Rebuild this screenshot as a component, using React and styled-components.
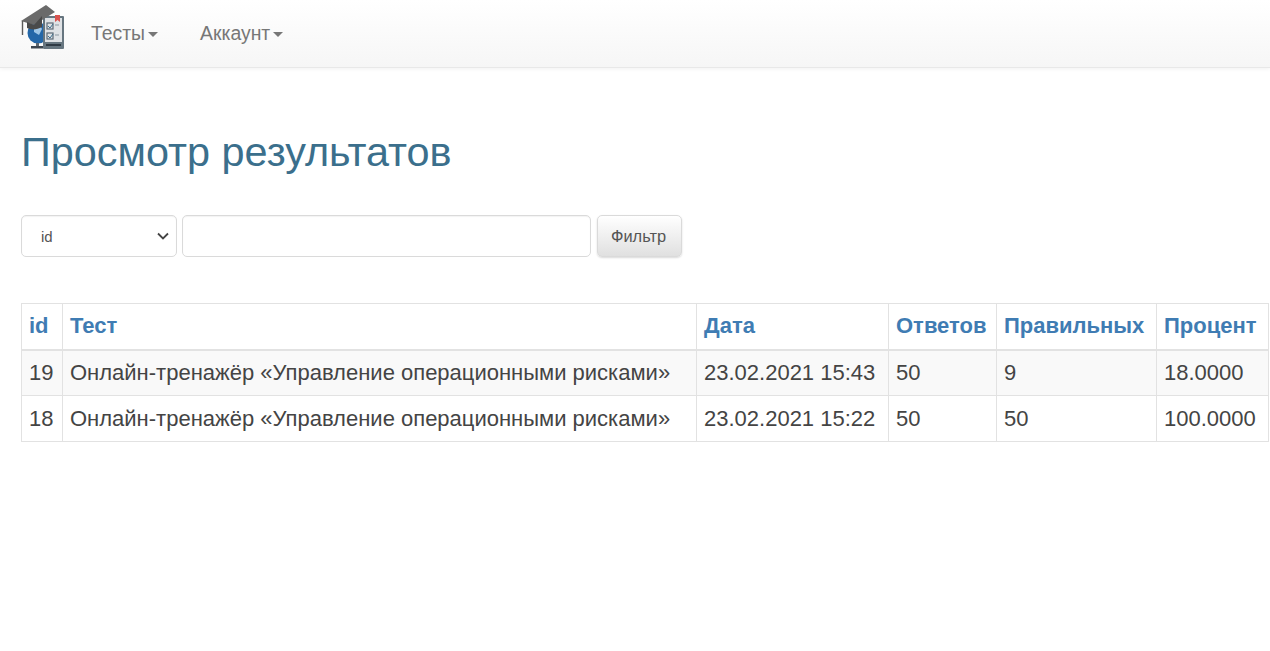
import React from "react";
import styled, { createGlobalStyle } from "styled-components";

const GlobalStyle = createGlobalStyle`
  html, body {
    margin: 0;
    background: #fff;
    font-family: "Liberation Sans", Arial, sans-serif;
    color: #333;
  }
`;

const NavBar = styled.nav`
  height: 68px;
  box-sizing: border-box;
  display: flex;
  align-items: flex-start;
  background: linear-gradient(to bottom, #fff 0%, #f6f6f6 100%);
  border-bottom: 1px solid #e8e8e8;
  box-shadow: 0 1px 4px rgba(0, 0, 0, 0.06);
  padding-left: 20px;
`;

const Logo = styled.svg`
  width: 46px;
  height: 50px;
  flex: none;
  margin-top: 3px;
  filter: blur(0.4px);
`;

const NavItem = styled.a`
  display: flex;
  align-items: center;
  height: 66px;
  font-size: 19.4px;
  color: #777;
  margin-left: ${(p) => p.$gap}px;
`;

const Caret = styled.span`
  width: 0;
  height: 0;
  margin-left: 3px;
  margin-top: 2px;
  border-top: 5px solid #777;
  border-left: 5px solid transparent;
  border-right: 5px solid transparent;
`;

const Main = styled.main`
  padding: 0 2px 0 21px;
`;

const Title = styled.h1`
  margin: 58px 0 0;
  font-size: 41.4px;
  line-height: 52px;
  font-weight: 400;
  color: #3b6f8c;
`;

const FilterForm = styled.form`
  display: flex;
  gap: 5px;
  margin-top: 37px;
  height: 42px;
`;

const Select = styled.div`
  width: 156px;
  box-sizing: border-box;
  display: flex;
  align-items: center;
  justify-content: space-between;
  padding: 0 5px 0 19px;
  border: 1px solid #dadada;
  border-radius: 5px;
  font-size: 15px;
  color: #555;
  box-shadow: inset 0 1px 1px rgba(0, 0, 0, 0.05);
`;

const Chevron = styled.svg`
  width: 16px;
  height: 16px;
`;

const Input = styled.input`
  width: 409px;
  box-sizing: border-box;
  border: 1px solid #dadada;
  border-radius: 5px;
  box-shadow: inset 0 1px 1px rgba(0, 0, 0, 0.05);
  outline: none;
`;

const FilterButton = styled.button`
  width: 85px;
  box-sizing: border-box;
  margin-left: 1px;
  border: 1px solid #dadada;
  border-radius: 5px;
  background: linear-gradient(to bottom, #fff 0%, #e0e0e0 100%);
  box-shadow: 0 1px 2px rgba(0, 0, 0, 0.15);
  font-family: inherit;
  font-size: 16.4px;
  color: #555;
  padding: 0 2px 0 0;
`;

const Table = styled.table`
  margin-top: 46px;
  width: 1247px;
  border-collapse: collapse;
  table-layout: fixed;
  font-size: 22px;
`;

const HeadCell = styled.th`
  height: 46px;
  box-sizing: border-box;
  padding: 0 7px;
  text-align: left;
  font-weight: 700;
  color: #3f7cb3;
  border: 1px solid #e2e2e2;
  border-bottom-width: 2px;
  white-space: nowrap;
`;

const Row = styled.tr`
  background: ${(p) => (p.$striped ? "#f9f9f9" : "#fff")};
`;

const Cell = styled.td`
  height: 46px;
  box-sizing: border-box;
  padding: 0 7px;
  border: 1px solid #e2e2e2;
  white-space: nowrap;
  color: #444;
`;

const columns = [
  { title: "id", width: 41 },
  { title: "Тест", width: 634 },
  { title: "Дата", width: 192 },
  { title: "Ответов", width: 108 },
  { title: "Правильных", width: 160 },
  { title: "Процент", width: 112 },
];

const results = [
  ["19", "Онлайн-тренажёр «Управление операционными рисками»", "23.02.2021 15:43", "50", "9", "18.0000"],
  ["18", "Онлайн-тренажёр «Управление операционными рисками»", "23.02.2021 15:22", "50", "50", "100.0000"],
];

// coordinates are page pixels, the viewBox starts where the logo sits
const LogoIcon = () => (
  <Logo viewBox="20 3 46 50">
    <circle cx="38" cy="33" r="10.5" fill="#2467a8" />
    <path d="M34 27c3-2 7-1 8 2l-3 6-5-3z" fill="#9fc6e6" />
    <path d="M31 46h12v2.500H31z" fill="#3d4650" />
    <path d="M36 43h3v3h-3z" fill="#5c6670" />
    <rect x="43" y="16" width="21" height="33" rx="1" fill="#66757f" />
    <rect x="45" y="18" width="17" height="24" fill="#dfe2e5" />
    <rect x="47" y="23" width="6" height="6" fill="none" stroke="#5d6a76" strokeWidth="1.200" />
    <rect x="47" y="33" width="6" height="6" fill="none" stroke="#5d6a76" strokeWidth="1.200" />
    <path d="M48 26l2 2 3-4M48 36l2 2 3-4" fill="none" stroke="#3b6f8c" strokeWidth="1" />
    <path d="M55 25h4M55 35h4" stroke="#8c97a1" strokeWidth="1.200" />
    <path d="M55 15h5v7l-2.500-2-2.500 2z" fill="#d9534f" />
    <path d="M46 44h15v2H46z" fill="#2f3a44" />
    <path d="M21 21L46 5l9 7-21 13z" fill="#6a6a6a" />
    <path d="M27 22v6c4 2 10 2 15-1v-11l-8 9z" fill="#4a4a4a" />
    <path d="M22.500 21v14" stroke="#5a5a5a" strokeWidth="1.400" />
  </Logo>
);

const App = () => (
  <>
    <GlobalStyle />
    <NavBar>
      <LogoIcon />
      <NavItem $gap={25}>
        Тесты
        <Caret />
      </NavItem>
      <NavItem $gap={42}>
        Аккаунт
        <Caret />
      </NavItem>
    </NavBar>
    <Main>
      <Title>Просмотр результатов</Title>
      <FilterForm>
        <Select>
          id
          <Chevron viewBox="0 0 16 16">
            <path d="M3 5.500l5 5 5-5" fill="none" stroke="#444" strokeWidth="1.800" />
          </Chevron>
        </Select>
        <Input type="text" />
        <FilterButton type="button">Фильтр</FilterButton>
      </FilterForm>
      <Table>
        <colgroup>
          {columns.map((c) => (
            <col key={c.title} style={{ width: c.width }} />
          ))}
        </colgroup>
        <thead>
          <tr>
            {columns.map((c) => (
              <HeadCell key={c.title}>{c.title}</HeadCell>
            ))}
          </tr>
        </thead>
        <tbody>
          {results.map((row, i) => (
            <Row key={row[0]} $striped={i === 0}>
              {row.map((value, j) => (
                <Cell key={j}>{value}</Cell>
              ))}
            </Row>
          ))}
        </tbody>
      </Table>
    </Main>
  </>
);

export default App;
